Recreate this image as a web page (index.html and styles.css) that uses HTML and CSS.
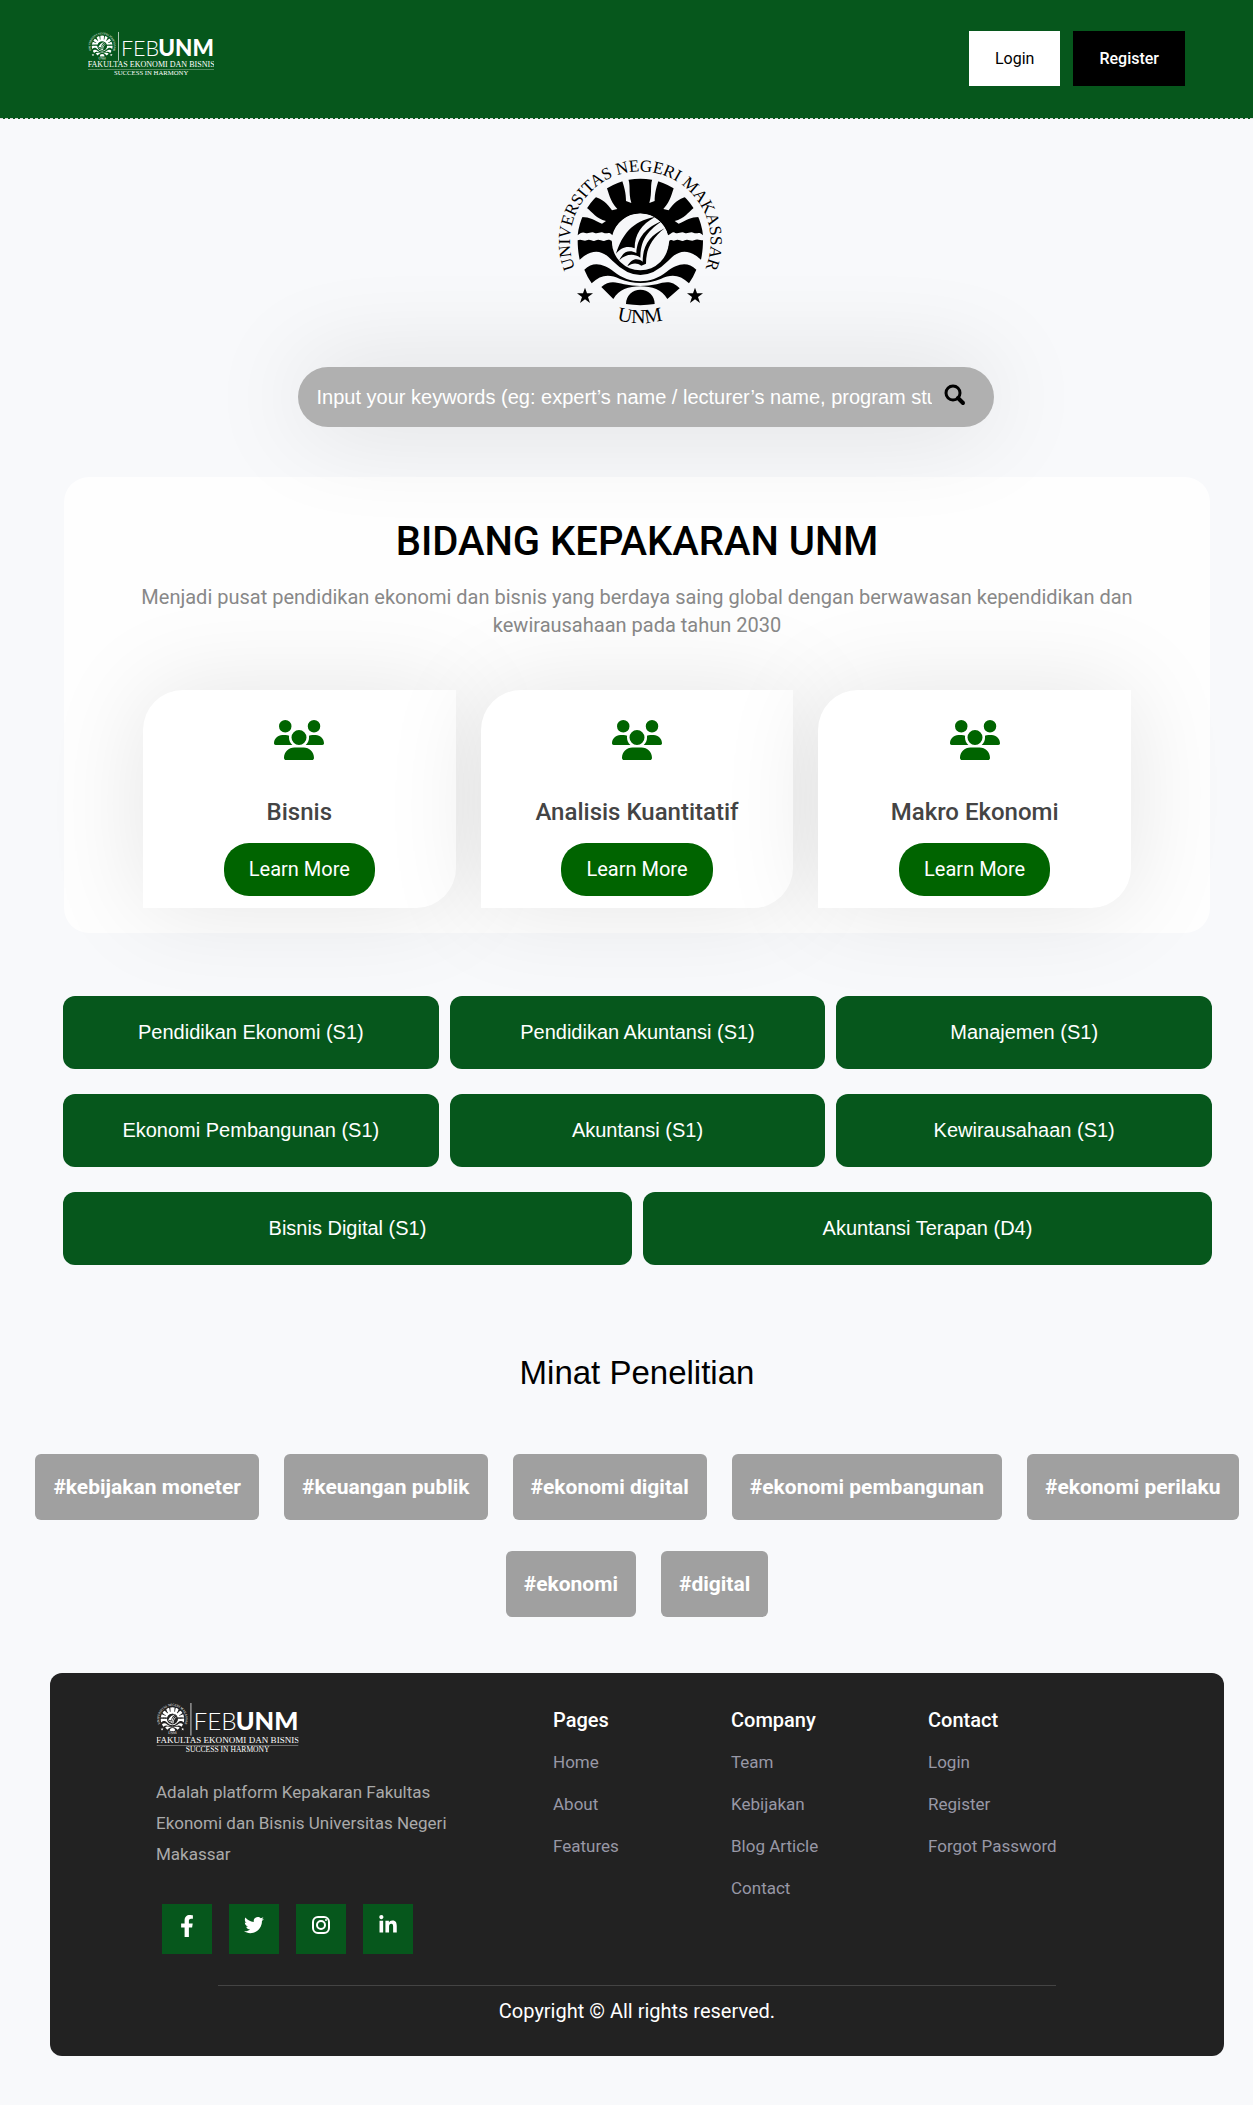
FILE: index.html
```html
<!DOCTYPE html>
<html lang="id">
<head>
<meta charset="utf-8">
<meta name="viewport" content="width=device-width, initial-scale=1">
<title>Kepakaran FEB UNM</title>
<link rel="stylesheet" href="styles.css">
</head>
<body>
<svg class="defs" width="0" height="0" aria-hidden="true">
  <defs>
    <path id="ring-top" d="M114 400 A211 211 0 1 1 488 400"/>
    <path id="ring-bottom" d="M150 496 A247 247 0 0 0 450 496"/>
    <symbol id="seal" viewBox="45 45 510 510">
      <path d="M113 283 A189 189 0 0 1 489 283 C478 270 470 280 462 276 C450 270 444 280 434 276 C424 270 416 280 406 276 C398 270 392 280 384 283 A86 86 0 0 0 217 283 C208 270 200 280 192 276 C182 270 174 280 164 276 C154 270 146 280 136 276 C128 272 120 276 113 283Z"/>
      <g class="seal-cut">
        <path d="M262 108 C274 130 264 152 274 186 L258 180 C258 158 254 140 240 100Z"/>
        <path d="M340 108 C328 130 338 152 328 186 L344 180 C344 158 348 140 362 100Z"/>
        <path d="M198 134 C208 158 208 176 232 204 L216 208 C200 186 190 176 160 166Z"/>
        <path d="M404 134 C394 158 394 176 370 204 L386 208 C402 186 412 176 442 166Z"/>
        <path d="M140 200 C158 214 168 232 198 240 L186 248 C160 236 148 226 118 228Z"/>
        <path d="M462 200 C444 214 434 232 404 240 L416 248 C442 236 454 226 484 228Z"/>
      </g>
      <path d="M113 298 C124 292 130 302 140 298 C150 292 158 304 168 298 C178 292 188 304 198 298 C206 294 210 298 215 299 A87 87 0 0 0 388 299 C394 294 398 302 406 298 C416 292 424 304 434 298 C444 292 452 302 462 298 C472 292 480 298 489 298 C489 318 487 338 483 356 C440 318 412 330 384 360 Q342 402 301 402 Q260 402 218 360 C190 330 162 318 119 356 C115 338 113 318 113 298Z"/>
      <circle class="seal-cut" cx="301" cy="303" r="85"/>
      <path d="M133 386 C160 360 190 368 222 392 C270 430 332 430 380 392 C412 368 442 360 469 386 Q460 408 447 427 C420 402 396 398 362 414 Q301 438 240 414 C206 398 182 402 155 427 Q142 408 133 386Z"/>
      <path d="M184 438 C206 418 226 422 252 430 Q301 440 350 430 C376 422 396 418 419 442 L382 474 C366 446 336 436 301 436 C266 436 236 446 220 474Z"/>
      <path d="M258 489 A43 43 0 0 1 344 489 Q301 496 258 489Z"/>
      <path d="M228 338 C246 282 276 240 345 228 C304 250 284 280 284 322 C262 312 242 320 228 338Z"/>
      <path d="M238 358 C250 330 268 326 289 336 C292 290 316 260 370 238 C326 268 302 292 301 350 C280 336 256 340 238 358Z"/>
      <path d="M262 376 C274 352 292 350 308 362 C308 312 330 284 374 262 C336 292 318 322 318 368 L304 374 C290 364 276 366 262 376Z"/>
      <path d="M135 440 l6 17 18 0 -15 11 6 18 -15 -11 -15 11 6 -18 -15 -11 18 0Z"/>
      <path d="M465 440 l6 17 18 0 -15 11 6 18 -15 -11 -15 11 6 -18 -15 -11 18 0Z"/>
      <text class="seal-text"><textPath href="#ring-top" startOffset="50%" text-anchor="middle">UNIVERSITAS NEGERI MAKASSAR</textPath></text>
      <text class="seal-text seal-text-low"><textPath href="#ring-bottom" startOffset="50%" text-anchor="middle">UNM</textPath></text>
    </symbol>
    <symbol id="brand" viewBox="0 0 375 132">
      <use href="#seal" x="0" y="0" width="84" height="84"/>
      <rect x="90" y="0" width="2" height="86"/>
      <text class="brand-thin" x="98" y="71">FEB</text>
      <text class="brand-bold" x="209" y="71">UNM</text>
      <text class="brand-serif" x="188" y="105" text-anchor="middle">FAKULTAS EKONOMI DAN BISNIS</text>
      <rect x="0" y="111" width="375" height="2" opacity=".45"/>
      <text class="brand-serif brand-small" x="188" y="130" text-anchor="middle">SUCCESS IN HARMONY</text>
    </symbol>
    <symbol id="users" viewBox="0 0 640 512">
      <path d="M144 0a80 80 0 1 1 0 160A80 80 0 1 1 144 0zM512 0a80 80 0 1 1 0 160A80 80 0 1 1 512 0zM0 298.700C0 239.800 47.800 192 106.700 192h42.700c15.900 0 31 3.500 44.600 9.700c-1.300 7.200-1.900 14.700-1.900 22.300c0 38.200 16.800 72.500 43.300 96H21.300C9.600 320 0 310.400 0 298.700zM405.300 320c26.600-23.500 43.300-57.800 43.300-96c0-7.600-.7-15-1.900-22.300c13.600-6.300 28.700-9.700 44.600-9.700h42.700C592.200 192 640 239.800 640 298.700c0 11.800-9.600 21.300-21.300 21.300H405.300zM224 224a96 96 0 1 1 192 0 96 96 0 1 1-192 0zM128 485.300C128 411.700 187.700 352 261.300 352H378.700C452.300 352 512 411.700 512 485.300c0 14.700-11.900 26.700-26.700 26.700H154.700c-14.700 0-26.700-11.900-26.700-26.700z"/>
    </symbol>
  </defs>
</svg>

<header class="topbar">
  <a class="topbar-brand" href="#" aria-label="FEB UNM"><svg class="brand" viewBox="0 0 375 132"><use href="#brand"/></svg></a>
  <nav class="topbar-nav">
    <a class="nav-button" href="#">Login</a>
    <a class="nav-button nav-button-dark" href="#">Register</a>
  </nav>
</header>

<main>
  <section class="hero">
    <svg class="hero-seal" viewBox="0 0 170 170" role="img" aria-label="Universitas Negeri Makassar"><use href="#seal" width="170" height="170"/></svg>
    <form class="search">
      <input class="search-input" type="text" aria-label="Keywords" placeholder="Input your keywords (eg: expert’s name / lecturer’s name, program study)">
      <button class="search-button" type="button" aria-label="Search">
        <svg width="22" height="22" viewBox="0 0 22 22"><circle cx="9" cy="9" r="7" fill="none" stroke="currentColor" stroke-width="3"/><path d="M14 14 L19 19" fill="none" stroke="currentColor" stroke-width="4" stroke-linecap="round"/></svg>
      </button>
    </form>
  </section>

  <section class="fields">
    <h1 class="fields-title">BIDANG KEPAKARAN UNM</h1>
    <p class="fields-lead">Menjadi pusat pendidikan ekonomi dan bisnis yang berdaya saing global dengan berwawasan kependidikan dan kewirausahaan pada tahun 2030</p>
    <div class="cards">
      <article class="card">
        <svg class="card-icon" viewBox="0 0 640 512" aria-hidden="true"><use href="#users"/></svg>
        <h2 class="card-title">Bisnis</h2>
        <a class="card-button" href="#">Learn More</a>
      </article>
      <article class="card">
        <svg class="card-icon" viewBox="0 0 640 512" aria-hidden="true"><use href="#users"/></svg>
        <h2 class="card-title">Analisis Kuantitatif</h2>
        <a class="card-button" href="#">Learn More</a>
      </article>
      <article class="card">
        <svg class="card-icon" viewBox="0 0 640 512" aria-hidden="true"><use href="#users"/></svg>
        <h2 class="card-title">Makro Ekonomi</h2>
        <a class="card-button" href="#">Learn More</a>
      </article>
    </div>
  </section>

  <section class="programs">
    <button class="program" type="button">Pendidikan Ekonomi (S1)</button>
    <button class="program" type="button">Pendidikan Akuntansi (S1)</button>
    <button class="program" type="button">Manajemen (S1)</button>
    <button class="program" type="button">Ekonomi Pembangunan (S1)</button>
    <button class="program" type="button">Akuntansi (S1)</button>
    <button class="program" type="button">Kewirausahaan (S1)</button>
    <button class="program program-wide" type="button">Bisnis Digital (S1)</button>
    <button class="program program-wide" type="button">Akuntansi Terapan (D4)</button>
  </section>

  <section class="interests">
    <h2 class="interests-title">Minat Penelitian</h2>
    <div class="tags">
      <a class="tag" href="#">#kebijakan moneter</a>
      <a class="tag" href="#">#keuangan publik</a>
      <a class="tag" href="#">#ekonomi digital</a>
      <a class="tag" href="#">#ekonomi pembangunan</a>
      <a class="tag" href="#">#ekonomi perilaku</a>
      <a class="tag" href="#">#ekonomi</a>
      <a class="tag" href="#">#digital</a>
    </div>
  </section>
</main>

<footer class="footer">
  <div class="footer-main">
    <div class="about">
      <svg class="brand brand-footer" viewBox="0 0 375 132" role="img" aria-label="FEB UNM"><use href="#brand"/></svg>
      <p class="about-text">Adalah platform Kepakaran Fakultas Ekonomi dan Bisnis Universitas Negeri Makassar</p>
      <div class="social">
        <a class="social-link" href="#" aria-label="Facebook"><svg width="14" height="22" viewBox="0 0 320 512"><path d="M279 288l14-93h-89v-60c0-25 12-50 52-50h41V7s-37-7-72-7c-73 0-121 45-121 125v70H23v93h81v224h100V288z"/></svg></a>
        <a class="social-link" href="#" aria-label="Twitter"><svg width="20" height="20" viewBox="0 0 512 512"><path d="M459 152c0 4 0 9 0 14 0 138-105 298-298 298-59 0-114-17-161-47 8 1 16 1 25 1 49 0 94-17 130-45-46-1-85-31-98-73 6 1 13 2 20 2 9 0 19-1 28-4-48-10-84-52-84-103v-1c14 8 30 13 47 13-28-19-47-51-47-87 0-19 5-37 14-53 52 64 129 105 216 110-2-8-3-16-3-24 0-58 47-105 105-105 30 0 57 13 77 33 24-5 46-13 66-25-8 24-24 45-46 58 21-2 42-8 60-16-14 21-32 39-51 54z"/></svg></a>
        <a class="social-link" href="#" aria-label="Instagram"><svg width="20" height="20" viewBox="0 0 20 20"><rect x="2" y="2" width="16" height="16" rx="5" fill="none" stroke="currentColor" stroke-width="2"/><circle cx="10" cy="10" r="4" fill="none" stroke="currentColor" stroke-width="2"/><circle cx="15" cy="5" r="1"/></svg></a>
        <a class="social-link" href="#" aria-label="LinkedIn"><svg width="20" height="20" viewBox="0 0 448 512"><path d="M100 448H7V149h93zM54 108C24 108 0 83 0 54a54 54 0 0 1 108 0c0 29-25 54-54 54zM448 448h-93V302c0-35-1-79-48-79-49 0-56 38-56 77v148h-93V149h89v41h1c13-24 43-49 88-49 94 0 112 62 112 143z"/></svg></a>
      </div>
    </div>
    <nav class="links">
      <h3 class="links-title">Pages</h3>
      <a class="link" href="#">Home</a>
      <a class="link" href="#">About</a>
      <a class="link" href="#">Features</a>
    </nav>
    <nav class="links">
      <h3 class="links-title">Company</h3>
      <a class="link" href="#">Team</a>
      <a class="link" href="#">Kebijakan</a>
      <a class="link" href="#">Blog Article</a>
      <a class="link" href="#">Contact</a>
    </nav>
    <nav class="links">
      <h3 class="links-title">Contact</h3>
      <a class="link" href="#">Login</a>
      <a class="link" href="#">Register</a>
      <a class="link" href="#">Forgot Password</a>
    </nav>
  </div>
  <hr class="footer-rule">
  <p class="copyright">Copyright © All rights reserved.</p>
</footer>
</body>
</html>
```
FILE: styles.css
```css
* { box-sizing: border-box; }

body {
  margin: 0;
  background: #f8f9fb;
  color: #000;
  font-family: Roboto, "Liberation Sans", sans-serif;
  font-size: 20px;
}

a { color: inherit; text-decoration: none; }
h1, h2, h3, p { margin: 0; }
svg { display: block; fill: currentColor; }

.defs { position: absolute; }
.seal-cut { fill: var(--cut, #f6f7f9); }
.seal-text { font-family: "Liberation Serif", serif; font-size: 51px; }
.seal-text-low { font-size: 60px; }
.brand-thin { font-family: Lato, sans-serif; font-weight: 300; font-size: 64px; }
.brand-bold { font-family: Lato, sans-serif; font-weight: 900; font-size: 67px; }
.brand-serif { font-family: "Liberation Serif", serif; font-size: 24px; }
.brand-small { font-size: 20px; }

/* Top bar */
.topbar {
  --cut: #06571c;
  display: flex;
  align-items: flex-start;
  justify-content: space-between;
  height: 119px;
  padding: 31px 68px 0 88px;
  background: #06571c;
  border-bottom: 1px dashed #ddd;
}
.topbar-brand { color: #fff; }
.brand { width: 126px; height: 46px; }
.topbar-nav { display: flex; gap: 13px; }
.nav-button {
  padding: 0 26px;
  background: #fff;
  font-size: 16px;
  line-height: 55px;
}
.nav-button-dark { background: #000; color: #fff; font-weight: 500; }

/* Seal and search */
.hero {
  display: flex;
  flex-direction: column;
  align-items: center;
  padding: 37px 27px 50px 53px;
}
.hero-seal { width: 170px; height: 170px; }
.search {
  display: flex;
  align-items: center;
  width: 100%;
  max-width: 696px;
  height: 60px;
  margin: 41px 0 0 12px;
  padding: 0 24px 0 19px;
  border-radius: 30px;
  background: #b0b0b0;
  box-shadow: 0 0 100px rgba(0, 0, 0, .13);
}
.search-input {
  flex: 1;
  min-width: 0;
  padding: 0;
  border: 0;
  outline: 0;
  background: transparent;
  color: #fff;
  font: 20px "Liberation Sans", Arial, sans-serif;
}
.search-input::placeholder { color: #fff; opacity: 1; }
.search-button {
  margin: 0 4px 4px 12px;
  padding: 0;
  border: 0;
  background: transparent;
  color: #000;
}

/* Fields of expertise */
.fields {
  margin: 0 43px 0 64px;
  padding: 37px 79px 25px;
  border-radius: 25px;
  background: rgba(255, 255, 255, .8);
  text-align: center;
}
.fields-title { font-size: 40px; font-weight: 500; line-height: 56px; }
.fields-lead { margin: 13px -8px 0; color: #888; line-height: 28px; }
.cards {
  display: grid;
  grid-template-columns: repeat(3, 1fr);
  gap: 25px;
  margin-top: 51px;
}
.card {
  position: relative;
  display: flex;
  flex-direction: column;
  align-items: center;
  padding: 30px 10px 12px;
  border-radius: 40px 0;
  background: #fff;
  box-shadow: 0 0 100px rgba(0, 0, 0, .1);
}
.card-icon { width: 50px; height: 40px; color: #006400; }
.card-title {
  margin: 36px 0 15px;
  color: #444;
  font-size: 24px;
  font-weight: 500;
  line-height: 32px;
}
.card-button {
  padding: 0 25px;
  border-radius: 25px;
  background: #006400;
  color: #fff;
  line-height: 53px;
}

/* Study programs */
.programs {
  display: grid;
  grid-template-columns: repeat(6, 1fr);
  gap: 25px 11px;
  margin: 63px 41px 0 63px;
}
.program {
  grid-column: span 2;
  height: 73px;
  border: 0;
  border-radius: 12px;
  background: #06571c;
  color: #fff;
  font: 20px "Liberation Sans", Arial, sans-serif;
}
.program-wide { grid-column: span 3; }

/* Research interests */
.interests { padding: 84px 0 56px 21px; }
.interests-title {
  font: 33px/48px "Liberation Sans", Arial, sans-serif;
  text-align: center;
}
.tags {
  display: flex;
  flex-wrap: wrap;
  justify-content: center;
  gap: 31px 25px;
  margin-top: 57px;
}
.tag {
  padding: 0 18px;
  border-radius: 6px;
  background: #a0a0a0;
  color: #fff;
  font-size: 21px;
  font-weight: 700;
  line-height: 66px;
}

/* Footer */
.footer {
  --cut: #222;
  margin: 0 29px 49px 50px;
  padding: 30px 106px 29px;
  border-radius: 12px;
  background: #222;
  color: #fff;
}
.footer-main {
  display: grid;
  grid-template-columns: 397px 178px 197px auto;
}
.brand-footer { width: 143px; height: 50px; }
.about-text {
  max-width: 310px;
  margin-top: 24px;
  color: #aaa;
  font-size: 17px;
  line-height: 31px;
}
.social { display: flex; gap: 17px; margin: 34px 0 0 6px; }
.social-link {
  display: flex;
  justify-content: center;
  width: 50px;
  height: 50px;
  padding-top: 11px;
  background: #06571c;
}
.links { display: flex; flex-direction: column; }
.links-title { font-size: 20px; font-weight: 500; line-height: 34px; }
.link { margin-top: 8px; color: #9898a6; font-size: 17px; line-height: 34px; }
.footer-rule {
  height: 1px;
  margin: 31px 62px 0;
  border: 0;
  background: #444;
}
.copyright { margin-top: 9px; line-height: 32px; text-align: center; }
```
